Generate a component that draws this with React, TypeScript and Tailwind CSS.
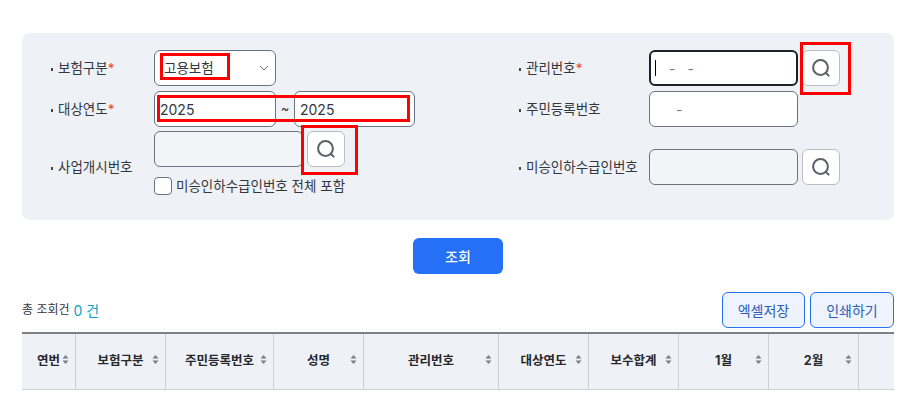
import React from "react";

const SearchIcon = () => (
  <svg width="20" height="20" viewBox="0 0 20 20" fill="none" stroke="#5b5f66" strokeWidth="2" strokeLinecap="round">
    <circle cx="9.5" cy="9.5" r="7.4" />
    <path d="M15 15l2.6 2.6" />
  </svg>
);

const SearchButton = () => (
  <button className="w-[38px] h-9 shrink-0 flex items-center justify-center bg-white border border-[#b8bcc4] rounded-md">
    <SearchIcon />
  </button>
);

const Label = ({ text, required, width }: { text: string; required?: boolean; width: string }) => (
  <div className={`flex items-center shrink-0 text-[13.5px] text-[#33373d] ${width}`}>
    <span className="w-[2px] h-[3px] bg-[#444] ml-[1px] mr-[5px] mt-[2px]" />
    <span>{text}</span>
    {required && <span className="text-[#f04438]">*</span>}
  </div>
);

const SortIcon = () => (
  <svg width="7" height="9" viewBox="0 0 7 9" className="absolute right-[6px] top-[21px]" fill="#7a7e85">
    <path d="M3.5 0L6.5 3.6H0.5z" />
    <path d="M3.5 9L0.5 5.4H6.5z" />
  </svg>
);

const columns = ["연번", "보험구분", "주민등록번호", "성명", "관리번호", "대상연도", "보수합계", "1월", "2월"];

export default function App() {
  return (
    <div className="relative w-[911px] h-[414px] overflow-hidden bg-white pt-[33px] px-[22px] font-['Inter','Noto_Sans_CJK_KR',sans-serif]">
      {/* search panel */}
      <div className="w-[872px] h-[187px] bg-[#eef1f6] rounded-lg pt-[17px] pl-7 flex">
        <div className="w-[468px] flex flex-col">
          <div className="flex items-center h-9 mb-[5px]">
            <Label text="보험구분" required width="w-[104px]" />
            <div className="w-[122px] h-9 bg-white border border-[#6b7280] rounded-md flex items-center justify-between pl-[9px] pr-[6px] text-[13.5px] text-[#33373d]">
              <span>고용보험</span>
              <svg width="10" height="6" viewBox="0 0 10 6" fill="none" stroke="#777" strokeWidth="1"><path d="M1 1l4 4 4-4" /></svg>
            </div>
          </div>
          <div className="flex items-center h-9 mb-1">
            <Label text="대상연도" required width="w-[104px]" />
            <div className="w-[122px] h-9 bg-white border border-[#6b7280] rounded-md flex items-center pl-[5px] text-[14px] text-[#33373d]">2025</div>
            <span className="w-[18px] text-center text-[13px] text-[#33373d]">~</span>
            <div className="w-[121px] h-9 bg-white border border-[#6b7280] rounded-md flex items-center pl-[5px] text-[14px] text-[#33373d]">2025</div>
          </div>
          <div className="flex items-center h-[72px]">
            <Label text="사업개시번호" width="w-[104px]" />
            <div className="self-start">
              <div className="flex gap-1">
                <div className="w-[149px] h-9 bg-[#f3f4f7] border border-[#6b7280] rounded-md" />
                <SearchButton />
              </div>
              <label className="flex items-center gap-1 mt-[9px] text-[13.5px] text-[#33373d]">
                <span className="w-[18px] h-[18px] bg-white border border-[#6b7280] rounded" />
                미승인하수급인번호 전체 포함
              </label>
            </div>
          </div>
        </div>
        <div className="flex flex-col">
          <div className="flex items-center h-9 mb-[5px]">
            <Label text="관리번호" required width="w-[131px]" />
            <div className="w-[149px] h-9 bg-white border-2 border-[#1f2023] rounded-md flex items-center pl-1 text-[14px] text-[#777]">
              <span className="w-px h-4 bg-black" />
              <span className="ml-[13px]">-</span>
              <span className="ml-[12px]">-</span>
            </div>
            <div className="ml-1"><SearchButton /></div>
          </div>
          <div className="flex items-center h-9 mb-1">
            <Label text="주민등록번호" width="w-[131px]" />
            <div className="w-[149px] h-9 bg-white border border-[#6b7280] rounded-md flex items-center pl-[26px] text-[14px] text-[#777]">-</div>
          </div>
          <div className="flex items-center h-[72px]">
            <Label text="미승인하수급인번호" width="w-[131px]" />
            <div className="w-[149px] h-9 bg-[#f3f4f7] border border-[#6b7280] rounded-md" />
            <div className="ml-1"><SearchButton /></div>
          </div>
        </div>
      </div>

      <div className="flex justify-center mt-[18px] w-[872px]">
        <button className="w-[90px] h-9 bg-[#2570f5] text-white text-[14px] font-medium rounded-md">조회</button>
      </div>

      {/* result toolbar */}
      <div className="flex items-center justify-between mt-[18px] w-[872px]">
        <div className="flex items-center gap-1 text-[12px] text-[#33373d]">
          총 조회건 <span className="text-[14px] text-[#0e9fc4]">0 건</span>
        </div>
        <div className="flex gap-[5px]">
          <button className="w-[83px] h-9 bg-[#eef3fd] border border-[#2570f5] rounded-md text-[14px] text-[#2b5cb8]">엑셀저장</button>
          <button className="w-[84px] h-9 bg-[#eef3fd] border border-[#2570f5] rounded-md text-[14px] text-[#2b5cb8]">인쇄하기</button>
        </div>
      </div>

      {/* table header */}
      <div className="grid grid-cols-[54px_90px_108px_90px_135px_90px_90px_90px_90px_35px] w-[872px] h-[58px] mt-1 bg-[#eef1f6] border-t-2 border-t-[#7c8087] border-b border-b-[#cdd0d5]">
        {columns.map((col) => (
          <div key={col} className="relative flex items-center justify-center border-r border-[#cdd0d5] text-[12.5px] font-bold text-[#26282c]">
            {col}
            <SortIcon />
          </div>
        ))}
        <div />
      </div>

      {/* red annotation boxes drawn over the form */}
      <div className="absolute left-[160px] top-[53px] w-[70px] h-[27px] border-[3px] border-[#ff0000]" />
      <div className="absolute left-[157px] top-[95px] w-[253px] h-[27px] border-[3px] border-[#ff0000]" />
      <div className="absolute left-[301px] top-[125px] w-[57px] h-[50px] border-[3px] border-[#ff0000]" />
      <div className="absolute left-[800px] top-[42px] w-[51px] h-[53px] border-[3px] border-[#ff0000]" />
    </div>
  );
}
